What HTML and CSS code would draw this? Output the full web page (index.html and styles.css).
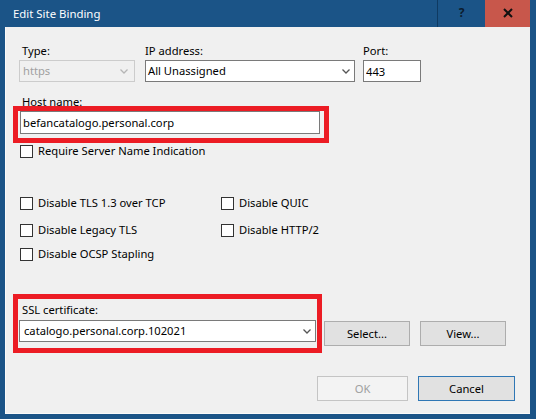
FILE: index.html
```html
<!DOCTYPE html>
<html lang="en">
<head>
    <meta charset="UTF-8">
    <title>Edit Site Binding</title>
    <link rel="stylesheet" href="styles.css">
</head>
<body>
    <div class="window">
        <div class="titlebar">
            <span class="title">Edit Site Binding</span>
            <div class="caption-help">?</div>
            <div class="caption-close">
                <svg width="10" height="10" viewBox="0 0 10 10"><path d="M1 1 L9 9 M9 1 L1 9" stroke="#111" stroke-width="2"/></svg>
            </div>
        </div>
        <div class="client">
            <!-- Type / IP / Port -->
            <div class="row-top">
                <div class="field-group type-group">
                    <label>Type:</label>
                    <div class="select disabled">
                        <span>https</span>
                        <svg class="chevron" width="8" height="5" viewBox="0 0 8 5"><path d="M0.5 0.5 L4 4 L7.5 0.5" fill="none" stroke="#b5b5b5" stroke-width="1.3"/></svg>
                    </div>
                </div>
                <div class="field-group ip-group">
                    <label>IP address:</label>
                    <div class="select">
                        <span>All Unassigned</span>
                        <svg class="chevron" width="8" height="5" viewBox="0 0 8 5"><path d="M0.5 0.5 L4 4 L7.5 0.5" fill="none" stroke="#555" stroke-width="1.3"/></svg>
                    </div>
                </div>
                <div class="field-group port-group">
                    <label>Port:</label>
                    <input type="text" class="textbox" value="443">
                </div>
            </div>

            <!-- Host name -->
            <label class="host-label">Host name:</label>
            <div class="highlight host-highlight">
                <input type="text" class="textbox host-input" value="befancatalogo.personal.corp">
            </div>
            <div class="check sni-check"><span class="box"></span>Require Server Name Indication</div>

            <!-- Options -->
            <div class="opt-row first">
                <div class="check"><span class="box"></span>Disable TLS 1.3 over TCP</div>
                <div class="check"><span class="box"></span>Disable QUIC</div>
            </div>
            <div class="opt-row second">
                <div class="check"><span class="box"></span>Disable Legacy TLS</div>
                <div class="check"><span class="box"></span>Disable HTTP/2</div>
            </div>
            <div class="opt-row third">
                <div class="check"><span class="box"></span>Disable OCSP Stapling</div>
            </div>

            <!-- SSL certificate -->
            <div class="ssl-row">
                <div class="highlight ssl-highlight">
                    <label class="ssl-label">SSL certificate:</label>
                    <div class="select ssl-select">
                        <span>catalogo.personal.corp.102021</span>
                        <svg class="chevron" width="8" height="5" viewBox="0 0 8 5"><path d="M0.5 0.5 L4 4 L7.5 0.5" fill="none" stroke="#555" stroke-width="1.3"/></svg>
                    </div>
                </div>
                <div class="ssl-buttons">
                    <button type="button" class="btn">Select...</button>
                    <button type="button" class="btn">View...</button>
                </div>
            </div>

            <!-- Dialog buttons -->
            <div class="dialog-buttons">
                <button type="button" class="btn btn-ok" disabled>OK</button>
                <button type="button" class="btn btn-cancel">Cancel</button>
            </div>
        </div>
    </div>
</body>
</html>
```
FILE: styles.css
```css
/* Windows 10 style dialog */
body {
    margin: 0;
    font-family: 'Noto Sans', sans-serif;
    font-size: 11.2px;
    color: #000;
}
.window {
    width: 536px;
    height: 419px;
    background: #1b5487;
    display: flex;
    flex-direction: column;
}
/* Title bar */
.titlebar {
    height: 27px;
    display: flex;
    align-items: stretch;
    flex-shrink: 0;
}
.title {
    flex: 1;
    padding-left: 13px;
    line-height: 27px;
    color: #fff;
    font-size: 11.4px;
}
.caption-help {
    width: 47px;
    border-left: 1px solid #0f3a62;
    text-align: center;
    line-height: 25px;
    font-weight: bold;
    font-size: 12px;
    color: #0b1c2e;
}
.caption-close {
    width: 45px;
    margin-right: 6px;
    background: #c8574b;
    display: flex;
    align-items: center;
    justify-content: center;
    padding-bottom: 2px;
    box-sizing: border-box;
}
/* Client area */
.client {
    flex: 1;
    margin: 0 6px 5px 5px;
    background: #f0f0f0;
    padding-left: 14px;
    display: flex;
    flex-direction: column;
    align-items: flex-start;
    box-shadow: inset 1px 0 #fafafa, inset 0 -1px #fafafa;
}
label {
    display: block;
    line-height: 15px;
}
/* Type / IP / Port row */
.row-top {
    display: flex;
    margin-top: 16px;
}
.field-group label {
    margin-bottom: 2px;
}
.type-group {
    width: 116px;
}
.type-group label {
    padding-left: 3px;
}
.ip-group {
    width: 210px;
    margin-left: 10px;
}
.port-group {
    width: 58px;
    margin-left: 8px;
}
.select {
    height: 22px;
    box-sizing: border-box;
    border: 1px solid #7a7a7a;
    background: #fff;
    display: flex;
    align-items: center;
    justify-content: space-between;
    padding: 0 4px 0 2px;
    line-height: 20px;
}
.select.disabled {
    border-color: #cccccc;
    background: #f0f0f0;
    color: #a0a0a0;
    padding: 0 6px 0 3px;
}
.chevron {
    display: block;
    margin-top: 1px;
}
.textbox {
    display: block;
    box-sizing: border-box;
    width: 100%;
    height: 22px;
    margin: 0;
    border: 1px solid #7a7a7a;
    background: #fff;
    padding: 0 2px;
    font: inherit;
    color: #000;
    outline: none;
}
/* Red annotation boxes */
.highlight {
    border: 5px solid #ec1c24;
    box-sizing: border-box;
}
.host-label {
    margin-top: 12px;
    padding-left: 3px;
}
.host-highlight {
    margin: -3px 0 0 -6px;
    width: 316px;
    padding: 0 0 4px 2px;
}
.host-input {
    width: 300px;
    height: 23px;
}
/* Checkboxes */
.check {
    display: flex;
    align-items: flex-start;
    line-height: 15px;
    white-space: nowrap;
}
.box {
    width: 13px;
    height: 13px;
    box-sizing: border-box;
    border: 1px solid #333;
    background: #fff;
    margin: 2px 5px 0 1px;
    flex-shrink: 0;
}
.opt-row {
    display: flex;
}
.opt-row .check:first-child {
    width: 201px;
}
.opt-row.first {
    margin-top: 37px;
}
.opt-row.second {
    margin-top: 12px;
}
.opt-row.third {
    margin-top: 9px;
}
/* SSL certificate */
.ssl-row {
    display: flex;
    align-items: flex-end;
    margin: 33px 0 0 -6px;
}
.ssl-highlight {
    width: 309px;
    padding: 3px 1px 6px 1px;
}
.ssl-label {
    padding-left: 3px;
    margin-bottom: 3px;
}
.ssl-select {
    padding-left: 4px;
}
.ssl-buttons {
    display: flex;
    gap: 10px;
    margin: 0 0 7px 2px;
}
.btn {
    width: 86px;
    height: 25px;
    margin: 0;
    padding: 0;
    border: 1px solid #adadad;
    background: #e1e1e1;
    font: inherit;
    color: #000;
}
/* OK / Cancel */
.dialog-buttons {
    display: flex;
    gap: 10px;
    align-self: flex-end;
    margin: 23px 15px 0 0;
}
.btn-ok {
    width: 91px;
    background: #f3f3f3;
    border-color: #c4c4c4;
    color: #a0a0a0;
}
.btn-cancel {
    width: 97px;
    border-color: #2f77b5;
}
```
